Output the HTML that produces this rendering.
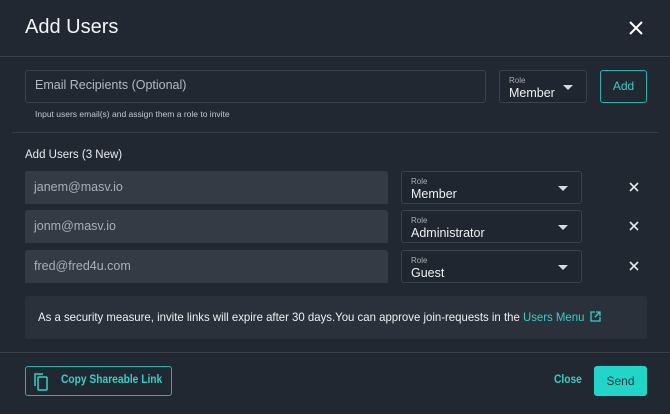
<!DOCTYPE html>
<html><head><style>
*{box-sizing:border-box;margin:0;padding:0}
body{width:670px;height:414px;background:#222832;font-family:"Liberation Sans",sans-serif;color:#e8eaed;position:relative;overflow:hidden}
.a{position:absolute}
.hr{position:absolute;height:1px;background:#3a3f47}
.inp{position:absolute;border:1px solid #3c424b;border-radius:3px}
.fill{position:absolute;background:#353b44;border-radius:3px 3px 0 0;color:#a9aeb5;font-size:12.5px;padding-left:9px;line-height:33px}
.sel{position:absolute;border:1px solid #3c424b;border-radius:3px;background:#20262f}
.sel .l{position:absolute;left:9px;top:5px;font-size:8px;color:#a9aeb5}
.sel .v{position:absolute;left:9px;top:15px;font-size:12.5px;color:#eef0f2}
.tri{position:absolute;width:0;height:0;border-left:5px solid transparent;border-right:5px solid transparent;border-top:5px solid #d8dbe0}
.sx{transform:scaleX(0.89);transform-origin:left center;white-space:nowrap}
</style></head><body>
<div class="a" style="left:25px;top:16px;font-size:20px;color:#f3f4f6">Add Users</div>
<svg class="a" style="left:629px;top:21px" width="14" height="14"><path d="M1 1L13 13M13 1L1 13" stroke="#fff" stroke-width="2"/></svg>
<div class="hr" style="left:0;top:56px;width:670px"></div>

<div class="inp" style="left:25px;top:70px;width:461px;height:33px"></div>
<div class="a" style="left:35px;top:78px;font-size:12.5px;color:#b4b9c0">Email Recipients (Optional)</div>
<div class="sel" style="left:499px;top:70px;width:88px;height:33px"><div class="l">Role</div><div class="v">Member</div><div class="tri" style="left:63px;top:14px"></div></div>
<div class="a" style="left:600px;top:70px;width:47px;height:33px;border:1px solid #1fb7ad;border-radius:3px;color:#2ed3c6;font-size:12px;text-align:center;line-height:31px">Add</div>
<div class="a" style="left:35px;top:109px;font-size:8.5px;color:#c3c7cc">Input users email(s) and assign them a role to invite</div>
<div class="hr" style="left:12px;top:132px;width:646px"></div>
<div class="a" style="left:25px;top:149px;font-size:11.5px;color:#e8eaed">Add Users (3 New)</div>

<div class="fill" style="left:25px;top:171px;width:363px;height:33px">janem@masv.io</div>
<div class="sel" style="left:401px;top:171px;width:181px;height:33px"><div class="l">Role</div><div class="v">Member</div><div class="tri" style="left:156px;top:14px"></div></div>
<svg class="a" style="left:629px;top:182px" width="10" height="10"><path d="M1 1L9 9M9 1L1 9" stroke="#e8eaed" stroke-width="1.6"/></svg>

<div class="fill" style="left:25px;top:210px;width:363px;height:33px">jonm@masv.io</div>
<div class="sel" style="left:401px;top:210px;width:181px;height:33px"><div class="l">Role</div><div class="v">Administrator</div><div class="tri" style="left:156px;top:14px"></div></div>
<svg class="a" style="left:629px;top:221px" width="10" height="10"><path d="M1 1L9 9M9 1L1 9" stroke="#e8eaed" stroke-width="1.6"/></svg>

<div class="fill" style="left:25px;top:250px;width:363px;height:33px">fred@fred4u.com</div>
<div class="sel" style="left:401px;top:250px;width:181px;height:33px"><div class="l">Role</div><div class="v">Guest</div><div class="tri" style="left:156px;top:14px"></div></div>
<svg class="a" style="left:629px;top:261px" width="10" height="10"><path d="M1 1L9 9M9 1L1 9" stroke="#e8eaed" stroke-width="1.6"/></svg>

<div class="a" style="left:25px;top:296px;width:622px;height:43px;background:#2b313b;border-radius:3px"></div>
<div class="a sx" style="left:38px;top:310px;font-size:12px;color:#eef0f2;transform:scaleX(0.95)">As a security measure, invite links will expire after 30 days.You can approve join-requests in the <span style="color:#2ed3c6">Users Menu</span></div>
<svg class="a" style="left:590px;top:311px" width="11" height="11"><path d="M5 1H1V10H10V6M6 1H10V5M10 1L5 6" stroke="#2ed3c6" stroke-width="1.3" fill="none"/></svg>

<div class="hr" style="left:0;top:352px;width:670px"></div>
<div class="a" style="left:25px;top:366px;width:147px;height:30px;border:1px solid #1fb7ad;border-radius:3px"></div>
<svg class="a" style="left:32px;top:372px" width="17" height="19"><path d="M3 14V2H11" stroke="#2ed3c6" stroke-width="1.5" fill="none"/><rect x="6" y="5" width="9" height="13" rx="1" stroke="#2ed3c6" stroke-width="1.5" fill="none"/></svg>
<div class="a sx" style="left:61px;top:374px;font-size:11.5px;font-weight:bold;color:#2ed3c6">Copy Shareable Link</div>
<div class="a sx" style="left:554px;top:374px;font-size:11.5px;font-weight:bold;color:#2ed3c6">Close</div>
<div class="a" style="left:594px;top:366px;width:53px;height:30px;background:#1fd6c9;border-radius:3px;color:#14323a;font-size:12px;text-align:center;line-height:30px">Send</div>
</body></html>
